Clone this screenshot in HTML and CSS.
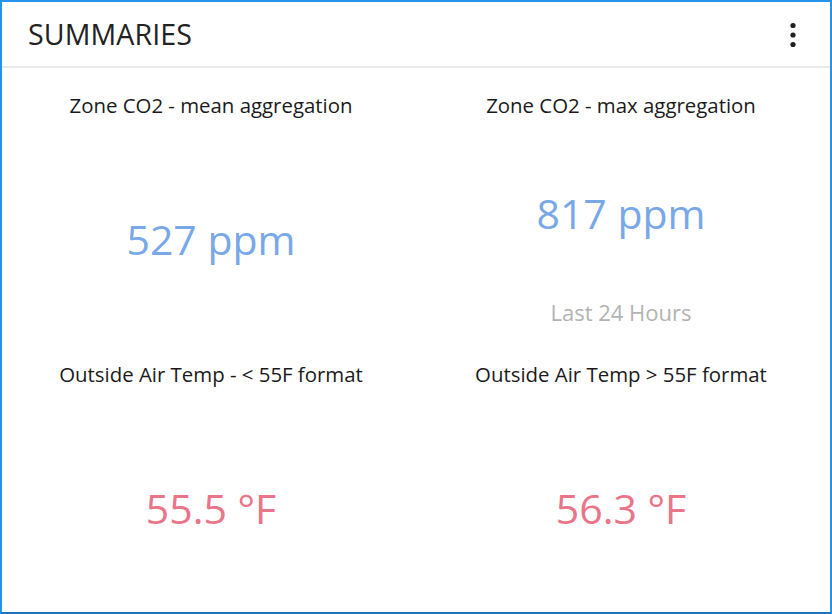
FILE: index.html
```html
<!DOCTYPE html>
<html>
<head>
<meta charset="utf-8">
<link rel="stylesheet" href="styles.css">
</head>
<body>
<div class="card">
  <div class="header">
    <div class="title">SUMMARIES</div>
    <svg class="menu" width="10" height="26" viewBox="0 0 10 26">
      <circle cx="5" cy="3.5" r="2.6" fill="#1f1f1f"/>
      <circle cx="5" cy="13" r="2.6" fill="#1f1f1f"/>
      <circle cx="5" cy="22.5" r="2.6" fill="#1f1f1f"/>
    </svg>
  </div>
  <div class="grid">
    <div class="cell">
      <div class="cell-title">Zone CO2 - mean aggregation</div>
      <div class="value blue">527 ppm</div>
    </div>
    <div class="cell">
      <div class="cell-title">Zone CO2 - max aggregation</div>
      <div class="value blue value-raised">817 ppm</div>
      <div class="footer">Last 24 Hours</div>
    </div>
    <div class="cell">
      <div class="cell-title">Outside Air Temp - &lt; 55F format</div>
      <div class="value red">55.5 °F</div>
    </div>
    <div class="cell">
      <div class="cell-title">Outside Air Temp &gt; 55F format</div>
      <div class="value red">56.3 °F</div>
    </div>
  </div>
</div>
</body>
</html>
```

FILE: styles.css
```css
html, body {
  margin: 0;
  padding: 0;
  background: #ffffff;
}
.card {
  width: 832px;
  height: 614px;
  box-sizing: border-box;
  border: 2px solid #2593ec;
  border-bottom-color: #1d74bd;
  background: #ffffff;
  font-family: "Open Sans", "Noto Sans", sans-serif;
  color: #1f1f1f;
  display: flex;
  flex-direction: column;
}
.header {
  height: 64px;
  border-bottom: 2px solid #ebebeb;
  display: flex;
  align-items: center;
  justify-content: space-between;
  padding: 0 32px 0 26px;
}
.title {
  font-size: 28.6px;
  line-height: 40px;
  color: #222222;
  letter-spacing: 0.1px;
}
.menu {
  display: block;
  margin-top: 2px;
}
.grid {
  flex: 1;
  display: grid;
  grid-template-columns: 1fr 1fr;
  grid-template-rows: 269px 269px;
  padding: 0 4px;
}
.cell {
  display: flex;
  flex-direction: column;
  align-items: center;
  padding-top: 23px;
}
.cell-title {
  font-size: 20.4px;
  line-height: 28px;
  color: #1a1a1a;
}
.value {
  font-size: 41px;
  line-height: 56px;
  margin-top: 92px;
}
.value-raised {
  margin-top: 66px;
}
.blue {
  color: #78a8e7;
}
.red {
  color: #ea7488;
}
.footer {
  margin-top: 57px;
  font-size: 22px;
  line-height: 28px;
  color: #b3b3b3;
}
```
